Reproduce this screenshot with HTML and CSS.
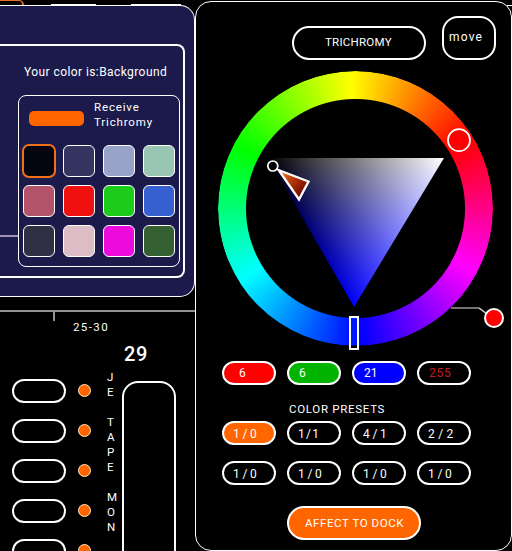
FILE: index.html
```
<!DOCTYPE html>
<html lang="en">
<head>
<meta charset="utf-8">
<title>Trichromy</title>
<link rel="stylesheet" href="styles.css">
</head>
<body>
<main class="app">
  <section class="left">
    <div class="topbar"><i class="tab"></i><i class="dash dash-a"></i><i class="dash dash-b"></i></div>
    <div class="dock">
      <div class="dock-frame">
        <p class="dock-title">Your color is:Background</p>
        <div class="dock-row">
          <i class="connector"></i>
          <div class="card">
            <div class="receive"><i class="bar"></i><span>Receive<br>Trichromy</span></div>
            <div class="swatches">
              <i class="sw selected c1"></i><i class="sw c2"></i><i class="sw c3"></i><i class="sw c4"></i>
              <i class="sw c5"></i><i class="sw c6"></i><i class="sw c7"></i><i class="sw c8"></i>
              <i class="sw c9"></i><i class="sw c10"></i><i class="sw c11"></i><i class="sw c12"></i>
            </div>
          </div>
        </div>
      </div>
    </div>
    <div class="schedule">
      <i class="tick"></i>
      <div class="range">25-30</div>
      <div class="day">29</div>
      <div class="columns">
        <div class="slots">
          <div class="slot"><i class="oval"></i><i class="dot"></i></div>
          <div class="slot"><i class="oval"></i><i class="dot"></i></div>
          <div class="slot"><i class="oval"></i><i class="dot"></i></div>
          <div class="slot"><i class="oval"></i><i class="dot"></i></div>
          <div class="slot"><i class="oval"></i><i class="dot"></i></div>
        </div>
        <div class="letters">J<br>E<br><br>T<br>A<br>P<br>E<br><br>M<br>O<br>N</div>
        <i class="track"></i>
      </div>
    </div>
  </section>

  <section class="right">
    <i class="stub"></i>
    <div class="panel">
      <header class="head">
        <div class="title"><span>TRICHROMY</span></div>
        <div class="move"><span>move</span></div>
      </header>
      <div class="stage">
        <div class="ring"></div>
        <svg class="overlay" viewBox="196 60 315 301" width="315" height="301">
          <defs>
            <linearGradient id="white" gradientUnits="userSpaceOnUse" x1="311.9" y1="234.3" x2="444" y2="158"><stop offset="0" stop-color="#000"/><stop offset="1" stop-color="#fff"/></linearGradient>
            <linearGradient id="blue" gradientUnits="userSpaceOnUse" x1="0" y1="158" x2="0" y2="307"><stop offset="0" stop-color="#000"/><stop offset="1" stop-color="#00f"/></linearGradient>
            <linearGradient id="arrow" x1="0" y1="0" x2="1" y2=".7"><stop offset="0" stop-color="#ff8a3c"/><stop offset=".45" stop-color="#b83c08"/><stop offset="1" stop-color="#680000"/></linearGradient>
          </defs>
          <g class="triangle">
            <path d="M268 158H444L354 307Z" fill="url(#white)"/>
            <path class="add" d="M268 158H444L354 307Z" fill="url(#blue)"/>
          </g>
          <path d="M278.500 170L308.500 181.500L299 199.500Z" fill="url(#arrow)" stroke="#fff" stroke-width="2.300"/>
          <circle cx="272.800" cy="166" r="5" fill="#000" stroke="#fff" stroke-width="1.700"/>
          <circle cx="459" cy="140.200" r="11" fill="#f00" stroke="#fff" stroke-width="1.700"/>
          <path d="M451 308H479" stroke="#888" stroke-width="1.700"/>
          <path d="M479 308L487 314" stroke="#ddd" stroke-width="1.500"/>
          <circle cx="494" cy="318" r="9" fill="#f00" stroke="#fff" stroke-width="2"/>
          <rect x="350" y="317" width="8" height="32" fill="#0018ff" stroke="#fff" stroke-width="2"/>
          <path d="M351 345.500H357V348H351Z" fill="#000"/>
        </svg>
      </div>
      <div class="pills">
        <div class="pill red"><span>6</span></div>
        <div class="pill green"><span>6</span></div>
        <div class="pill blue"><span>21</span></div>
        <div class="pill alpha"><span>255</span></div>
      </div>
      <div class="label">COLOR PRESETS</div>
      <div class="pills presets">
        <div class="pill active"><span>1/0</span></div>
        <div class="pill ones"><span>1/1</span></div>
        <div class="pill"><span>4/1</span></div>
        <div class="pill wide"><span>2/2</span></div>
        <div class="pill"><span>1/0</span></div>
        <div class="pill"><span>1/0</span></div>
        <div class="pill"><span>1/0</span></div>
        <div class="pill"><span>1/0</span></div>
      </div>
      <div class="affect"><span>AFFECT TO DOCK</span></div>
    </div>
  </section>
</main>
</body>
</html>
```
FILE: styles.css
```
* { box-sizing: border-box; }
body { margin: 0; background: #000; color: #fff; font-family: Roboto, "Liberation Sans", sans-serif; font-size: 12px; overflow: hidden; }
i { display: block; flex: none; font-style: normal; }
.app { display: flex; width: 512px; height: 551px; overflow: hidden; }
.left { width: 195px; height: 551px; overflow: hidden; flex: none; }

/* Colour dock */
.topbar { display: flex; align-items: flex-end; height: 5px; }
.tab { width: 24px; height: 5px; border: solid #e8702a; border-width: 1px 2px 0 0; border-top-right-radius: 7px; }
.dash { height: 1px; background: #fff; }
.dash-a { width: 45px; margin-left: 27px; }
.dash-b { width: 50px; margin-left: 35px; }
.dock { height: 292px; padding: 38px 9px 19px 0; background: #1b1a4b; border: solid #fff; border-width: 1px 1px 1px 0; border-radius: 0 15px 15px 0; }
.dock-frame { height: 234px; border: 2px solid #fff; border-left: 0; border-radius: 0 8px 8px 0; padding-top: 17px; }
.dock-title { margin: 0 0 0 24px; height: 32px; line-height: 19px; white-space: nowrap; font-size: 12px; letter-spacing: .42px; }
.dock-row { display: flex; align-items: flex-start; }
.connector { width: 18px; height: 2px; margin-top: 140px; background: #9c95b8; }
.card { flex: none; width: 162px; height: 172px; border: 1px solid #fff; border-radius: 8px; padding: 3px 3px 0; }
.receive { display: flex; height: 45px; line-height: 15px; font-size: 11.500px; letter-spacing: .85px; }
.receive span { margin: 1px 0 0 10px; }
.bar { width: 55px; height: 15px; margin: 12px 0 0 7px; background: #f60; border-radius: 5px; }
.swatches { display: grid; grid-template-columns: repeat(4, 34px); gap: 6px; }
.sw { width: 32px; height: 32px; margin: 1px; border: 1px solid #fff; border-radius: 6px; }
.sw.selected { width: 34px; height: 34px; margin: 0; border: 2px solid #f07018; border-radius: 7px; }
.c1 { background: #050510; }
.c2 { background: #343460; }
.c3 { background: #98a3ca; }
.c4 { background: #99c6b3; }
.c5 { background: #b4546b; }
.c6 { background: #f01010; }
.c7 { background: #1dcc19; }
.c8 { background: #3660d0; }
.c9 { background: #303044; }
.c10 { background: #dcbdc5; }
.c11 { background: #ec0adc; }
.c12 { background: #345f31; }

/* Schedule */
.schedule { margin-top: 13px; border-top: 2px solid #929292; }
.tick { width: 2px; height: 9px; margin-left: 53px; background: #929292; }
.range { margin-left: 73px; height: 20px; line-height: 13px; letter-spacing: 1.400px; font-size: 11.5px; }
.day { margin-left: 124px; height: 30px; line-height: 27px; font-size: 20px; font-weight: 500; letter-spacing: .6px; }
.columns { display: flex; align-items: flex-start; }
.slots { width: 107px; padding: 8px 0 0 12px; }
.slot { display: flex; align-items: center; gap: 12px; height: 24px; margin-bottom: 16px; }
.oval { width: 54px; height: 24px; border: 2px solid #fff; border-radius: 12px; }
.dot { width: 13px; height: 13px; margin-top: -1px; border: 1px solid #ffe9c8; border-radius: 50%; background: #f60; }
.letters { width: 15px; font-size: 11.500px; line-height: 15px; margin-top: -1px; }
.track { width: 54px; height: 190px; margin-top: 10px; border: 2px solid #fff; border-radius: 16px; }

/* Trichromy panel */
.right { position: relative; width: 317px; padding-top: 1px; flex: none; }
.stub { position: absolute; top: 5px; right: 0; width: 5px; height: 1px; background: #fff; }
.panel { display: flex; flex-direction: column; height: 550px; border: 1px solid #fff; border-radius: 16px; }
.head { display: flex; align-items: flex-end; gap: 16px; height: 58px; margin-left: 96px; flex: none; }
.title { width: 134px; height: 34px; border: 2px solid #fff; border-radius: 17px; line-height: 29px; padding-left: 31px; font-size: 11.5px; letter-spacing: .25px; }
.move { width: 54px; height: 44px; border: 2px solid #fff; border-radius: 16px; line-height: 38px; padding-left: 5px; letter-spacing: 1.200px; font-size: 12px; }
.stage { display: grid; height: 301px; flex: none; }
.ring, .overlay { grid-area: 1 / 1; }
.ring { width: 275px; height: 275px; margin: 10.500px 0 0 22px; border-radius: 50%; background: conic-gradient(from -2deg, #ff0, #f00, #f0f, #00f, #0ff, #0f0, #ff0); mask: radial-gradient(circle, transparent 109px, #000 110px); }
.overlay { display: block; position: relative; z-index: 1; }
.triangle { isolation: isolate; }
.add { mix-blend-mode: plus-lighter; }
.pills { display: grid; grid-template-columns: repeat(4, 54px); gap: 16px 11px; margin-left: 26px; }
.pill { height: 24px; border: 2px solid #fff; border-radius: 12px; line-height: 21px; padding-left: 10px; font-size: 12px; }
.red { background: #f00; padding-left: 15px; }
.green { background: #00b400; }
.blue { background: #00f; }
.alpha { color: #c41c1c; letter-spacing: .8px; }
.label { height: 36px; margin-left: 93px; line-height: 48px; font-size: 11.500px; letter-spacing: .7px; }
.presets .pill { padding-left: 9px; letter-spacing: 2.700px; line-height: 22px; }
.presets .ones { letter-spacing: 1.300px; }
.presets .active { background: #f60; }
.presets .wide { letter-spacing: 3.400px; }
.affect { width: 134px; height: 34px; margin: 21px 0 0 91px; border: 2px solid #fff; border-radius: 17px; background: #f60; line-height: 31px; padding-left: 16px; font-size: 11.500px; letter-spacing: .58px; white-space: nowrap; }
```
